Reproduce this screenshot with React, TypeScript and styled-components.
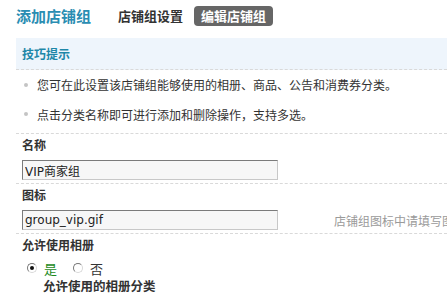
import React from "react";
import styled, { createGlobalStyle } from "styled-components";

const Global = createGlobalStyle`
  html, body { margin: 0; padding: 0; background: #fff; }
  body { font-family: "DejaVu Sans", "Noto Sans CJK SC", sans-serif; font-size: 12px; color: #333; overflow: hidden; }
`;

const CJK = `"Noto Sans CJK SC", sans-serif`;

const Page = styled.div`
  width: 447px;
  height: 303px;
  overflow: hidden;
`;

const Header = styled.div`
  display: flex;
  align-items: center;
  height: 31px;
  padding: 0 0 0 16px;
  box-sizing: border-box;
`;

const Title = styled.h1`
  margin: 0 27px 0 0;
  font-family: ${CJK};
  font-size: 15px;
  font-weight: 700;
  color: #2a8db2;
  line-height: 20px;
`;

const Tab = styled.span<{ $active?: boolean }>`
  font-family: ${CJK};
  font-size: 13px;
  font-weight: 700;
  line-height: 20px;
  padding: 0 7px;
  margin-right: 4px;
  border-radius: 4px;
  color: ${(p) => (p.$active ? "#fff" : "#333")};
  background: ${(p) => (p.$active ? "#666" : "transparent")};
  margin-left: ${(p) => (p.$active ? "0" : "-7px")};
`;

const Tips = styled.div`
  margin: 7px 0 0 16px;
  background: #eef5fc;
  height: 31px;
  border-bottom: 1px dashed #d9d9d9;
  display: flex;
  align-items: center;
  padding-left: 6px;
`;

const TipsTitle = styled.h3`
  margin: 0;
  font-family: ${CJK};
  font-size: 12px;
  font-weight: 700;
  color: #1e87a8;
`;

const TipList = styled.ul`
  list-style: none;
  margin: 0 0 0 16px;
  padding: 0;
  border-bottom: 1px dashed #d9d9d9;
`;

const TipItem = styled.li`
  display: flex;
  align-items: center;
  height: 29px;
  padding-left: 8px;
  font-family: ${CJK};
  font-size: 12px;
  color: #333;
  &:last-child { height: 34px; padding-bottom: 4px; box-sizing: border-box; }
  &::before {
    content: "";
    width: 4px;
    height: 4px;
    border-radius: 50%;
    background: #c4c4c4;
    margin-right: 9px;
    flex: none;
  }
`;

const Field = styled.div<{ $last?: boolean }>`
  margin-left: 16px;
  padding-left: 6px;
  border-bottom: ${(p) => (p.$last ? "none" : "1px dashed #d9d9d9")};
`;

const Label = styled.div`
  font-family: ${CJK};
  font-size: 12px;
  font-weight: 700;
  color: #333;
  line-height: 16px;
  padding-top: 3px;
`;

const Row = styled.div`
  display: flex;
  align-items: center;
  padding: 7px 0 3px;
`;

const Input = styled.input`
  box-sizing: border-box;
  flex: none;
  width: 256px;
  height: 20px;
  margin: 0;
  padding: 0 2px;
  border: 1px solid #c8c8c8;
  border-top-color: #7b7b7b;
  border-left-color: #7b7b7b;
  background: #f7f7f7;
  font-family: "DejaVu Sans", "Noto Sans CJK SC", sans-serif;
  font-size: 12px;
  color: #222;
  outline: none;
`;

const Hint = styled.span`
  margin-left: 56px;
  font-family: ${CJK};
  font-size: 12px;
  color: #9a9a9a;
  white-space: nowrap;
`;

const Radios = styled.div`
  display: flex;
  align-items: center;
  height: 20px;
  margin-top: 5px;
  padding-left: 5px;
`;

const RadioLabel = styled.label<{ $on?: boolean }>`
  display: inline-flex;
  align-items: center;
  margin-right: 16px;
  font-family: ${CJK};
  font-size: 13px;
  color: ${(p) => (p.$on ? "#1c8a1c" : "#333")};
`;

const Dot = styled.span<{ $on?: boolean }>`
  box-sizing: border-box;
  width: 10px;
  height: 10px;
  border-radius: 50%;
  border: 1px solid #d8d8d8;
  border-top-color: #777;
  border-left-color: #777;
  background: #fff;
  margin-right: 7px;
  display: inline-flex;
  align-items: center;
  justify-content: center;
  &::after {
    content: "";
    width: 4px;
    height: 4px;
    border-radius: 50%;
    background: ${(p) => (p.$on ? "#111" : "transparent")};
  }
`;

const SubLabel = styled.div`
  font-family: ${CJK};
  font-size: 12.5px;
  font-weight: 700;
  color: #333;
  padding-left: 21px;
  line-height: 16px;
  margin-top: 0px;
`;

export default function App() {
  return (
    <Page>
      <Global />
      <Header>
        <Title>添加店铺组</Title>
        <Tab>店铺组设置</Tab>
        <Tab $active>编辑店铺组</Tab>
      </Header>
      <Tips>
        <TipsTitle>技巧提示</TipsTitle>
      </Tips>
      <TipList>
        <TipItem>您可在此设置该店铺组能够使用的相册、商品、公告和消费券分类。</TipItem>
        <TipItem>点击分类名称即可进行添加和删除操作，支持多选。</TipItem>
      </TipList>
      <Field>
        <Label>名称</Label>
        <Row>
          <Input defaultValue="VIP商家组" />
        </Row>
      </Field>
      <Field>
        <Label>图标</Label>
        <Row>
          <Input defaultValue="group_vip.gif" />
          <Hint>店铺组图标中请填写图片文件名</Hint>
        </Row>
      </Field>
      <Field $last>
        <Label>允许使用相册</Label>
        <Radios>
          <RadioLabel $on>
            <Dot $on />是
          </RadioLabel>
          <RadioLabel>
            <Dot />否
          </RadioLabel>
        </Radios>
        <SubLabel>允许使用的相册分类</SubLabel>
      </Field>
    </Page>
  );
}
